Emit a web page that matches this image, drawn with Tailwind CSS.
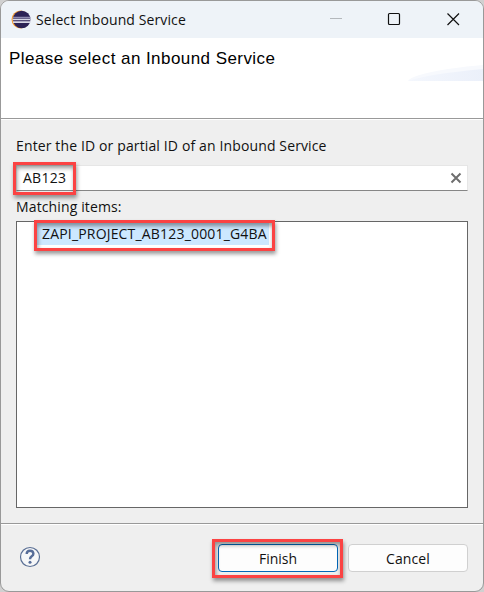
<!DOCTYPE html>
<html lang="en">
<head>
<meta charset="utf-8">
<title>Select Inbound Service</title>
<script src="https://cdn.jsdelivr.net/npm/@tailwindcss/browser@4"></script>
</head>
<body class="w-[484px] h-[592px] overflow-hidden bg-[#d0d0d0] font-['Open_Sans','Noto_Sans',sans-serif] text-[14px] text-[#111]">
<div class="w-[484px] h-[592px] flex flex-col rounded-[9px] border border-[#999] bg-[#efefef] overflow-hidden">
  <header class="h-[37px] shrink-0 bg-[#eef3f8] flex items-center pl-[10px]">
    <svg class="w-5 h-5 shrink-0" viewBox="0 0 20 20">
      <circle cx="9.5" cy="9.5" r="9" fill="#f49b32"/>
      <circle cx="10.7" cy="9.5" r="8.8" fill="#2c2255"/>
      <path d="M2 7.500h17.500" stroke="#8f8bb0" stroke-width="1.500"/>
      <path d="M1.500 9.500h18M2 12.200h17.500" stroke="#d9d8e6" stroke-width="1.700"/>
    </svg>
    <h1 class="ml-[5px] leading-5 whitespace-nowrap tracking-[0.11px]">Select Inbound Service</h1>
    <svg class="ml-auto w-[162px] h-[37px] shrink-0" viewBox="-30 0 162 37" fill="none">
      <path d="M-21 17.500h12" stroke="#b4b8bc"/>
      <rect x="37.5" y="12.5" width="11" height="11" rx="1" stroke="#111" stroke-width="1.2"/>
      <path d="M96.500 12.500l11.500 11.500M108 12.500l-11.500 11.500" stroke="#111" stroke-width="1.2"/>
    </svg>
  </header>
  <section class="h-[80px] shrink-0 bg-white flex justify-between">
    <h2 class="pl-[8px] pt-[11px] font-['Liberation_Sans',Arial,sans-serif] text-[17px] leading-5 tracking-[0.44px] whitespace-nowrap text-black">Please select an Inbound Service</h2>
    <svg class="w-[75px] h-[43px] shrink-0" viewBox="0 0 75 43">
      <defs><linearGradient id="sweep"><stop stop-color="#f4f7fd"/><stop offset="1" stop-color="#ebf0fa"/></linearGradient></defs>
      <path d="M0 43Q3 37 40 31Q60 28 75 27V43Z" fill="#f7f9fd"/>
      <path d="M0 43Q20 36 75 31V43Z" fill="url(#sweep)"/>
    </svg>
  </section>
  <div class="h-[2px] shrink-0 border-t border-[#999] bg-white"></div>
  <main class="px-[15px] h-[403px] shrink-0 flex flex-col">
    <label class="mt-[16px] h-5 leading-5 whitespace-nowrap tracking-[0.13px]">Enter the ID or partial ID of an Inbound Service</label>
    <div class="relative mt-[9px] h-[26px] w-[452px] bg-white border border-[#e6e6e6] border-b-[#868686] flex items-center justify-between pl-[6px] pr-[5px]">
      <span class="leading-5 tracking-[0.25px]">AB123</span>
      <svg class="w-3 h-3" viewBox="0 0 12 12"><path d="M1.500 1.500l9 9M10.500 1.500l-9 9" stroke="#6e6e6e" stroke-width="2"/></svg>
      <div class="absolute left-[-4px] top-[-4px] w-[63px] h-[33px] border-3 border-[#fb4343] shadow-[1px_3px_4px_#0006,inset_1px_3px_4px_#0006]"></div>
    </div>
    <p class="mt-[6px] h-5 leading-5 whitespace-nowrap tracking-[0.13px]">Matching items:</p>
    <div class="relative mt-[4px] w-[452px] h-[287px] bg-white border border-[#666]">
      <div class="ml-[20px] mt-[1px] w-[232px] h-[22px] bg-[#cce8ff] pl-[5px] leading-[22px] whitespace-nowrap tracking-[0.18px]">ZAPI_PROJECT_AB123_0001_G4BA</div>
      <div class="absolute left-[17px] top-[-2px] w-[241px] h-[31px] border-3 border-[#fb4343] shadow-[1px_3px_4px_#0006,inset_1px_3px_4px_#0006]"></div>
    </div>
  </main>
  <div class="h-[2px] shrink-0 border-t border-[#999] bg-white"></div>
  <footer class="flex-1 flex items-center pl-[18px] pr-[15px]">
    <svg class="w-[22px] h-[22px] relative -top-px" viewBox="0 0 22 22" fill="none">
      <circle cx="11" cy="11" r="9.500" fill="#f6f7f8" stroke="#5b7095" stroke-width="1.2"/>
      <path d="M7.700 8Q7.700 4.700 11 4.700T14.400 7.800Q14.400 9.200 12.700 10.300Q11 11.500 11 13.200" stroke="#576d98" stroke-width="2.400"/>
      <circle cx="11" cy="16.300" r="1.500" fill="#576d98"/>
    </svg>
    <div class="relative ml-auto flex gap-[10px]">
      <button class="w-[120px] h-[28px] rounded-[4px] border border-[#0067b8] bg-[#fdfdfd] leading-none pt-px">Finish</button>
      <button class="w-[120px] h-[28px] rounded-[4px] border border-[#d0d0d0] bg-[#fdfdfd] leading-none pt-px tracking-[0.1px]">Cancel</button>
      <div class="absolute left-[-6px] top-[-5px] w-[131px] h-[39px] border-3 border-[#fb4343] shadow-[1px_3px_4px_#0006,inset_1px_3px_4px_#0006]"></div>
    </div>
  </footer>
</div>
</body>
</html>
